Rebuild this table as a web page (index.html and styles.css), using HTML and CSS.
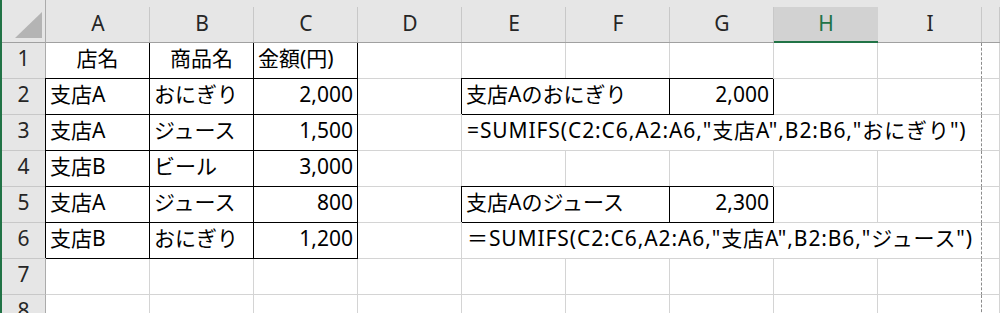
FILE: index.html
```html
<!DOCTYPE html>
<html lang="ja">
<head>
    <meta charset="UTF-8">
    <meta name="viewport" content="width=device-width, initial-scale=1.0">
    <title>SUMIFS</title>
    <link rel="stylesheet" href="styles.css">
</head>
<body>
    <div class="sheet">
        <!-- column headers -->
        <div class="corner"><svg width="43" height="42" viewBox="0 0 43 42"><path d="M40 12V38H13Z" fill="#b4b4b4"/></svg></div>
        <div class="ch">A</div><div class="ch">B</div><div class="ch">C</div><div class="ch">D</div><div class="ch">E</div>
        <div class="ch">F</div><div class="ch">G</div><div class="ch sel">H</div><div class="ch">I</div><div class="ch"></div>

        <!-- 1 -->
        <div class="rh">1</div>
        <div class="c mid k">店名</div><div class="c mid k">商品名</div><div class="c k">金額(円)</div>
        <div class="c"></div><div class="c"></div><div class="c"></div><div class="c"></div><div class="c"></div><div class="c pb"></div><div class="c"></div>

        <!-- 2 -->
        <div class="rh">2</div>
        <div class="c k box">支店A</div><div class="c k box">おにぎり</div><div class="c num k box">2,000</div>
        <div class="c"></div>
        <div class="c k box span2">支店Aのおにぎり</div><div class="c num k box">2,000</div>
        <div class="c"></div><div class="c pb"></div><div class="c"></div>

        <!-- 3 -->
        <div class="rh">3</div>
        <div class="c k box">支店A</div><div class="c k box">ジュース</div><div class="c num k box">1,500</div>
        <div class="c"></div>
        <div class="c pb span5 formula">=SUMIFS(C2:C6,A2:A6,"支店A",B2:B6,"おにぎり")</div>
        <div class="c"></div>

        <!-- 4 -->
        <div class="rh">4</div>
        <div class="c k box">支店B</div><div class="c k box">ビール</div><div class="c num k box">3,000</div>
        <div class="c"></div><div class="c"></div><div class="c"></div><div class="c"></div><div class="c"></div><div class="c pb"></div><div class="c"></div>

        <!-- 5 -->
        <div class="rh">5</div>
        <div class="c k box">支店A</div><div class="c k box">ジュース</div><div class="c num k box">800</div>
        <div class="c"></div>
        <div class="c k box span2">支店Aのジュース</div><div class="c num k box">2,300</div>
        <div class="c"></div><div class="c pb"></div><div class="c"></div>

        <!-- 6 -->
        <div class="rh">6</div>
        <div class="c k box">支店B</div><div class="c k box">おにぎり</div><div class="c num k box">1,200</div>
        <div class="c"></div>
        <div class="c pb span5 formula">＝SUMIFS(C2:C6,A2:A6,"支店A",B2:B6,"ジュース")</div>
        <div class="c"></div>

        <!-- 7 -->
        <div class="rh">7</div>
        <div class="c"></div><div class="c"></div><div class="c"></div><div class="c"></div><div class="c"></div>
        <div class="c"></div><div class="c"></div><div class="c"></div><div class="c pb"></div><div class="c"></div>

        <!-- 8 -->
        <div class="rh">8</div>
        <div class="c"></div><div class="c"></div><div class="c"></div><div class="c"></div><div class="c"></div>
        <div class="c"></div><div class="c"></div><div class="c"></div><div class="c pb"></div><div class="c"></div>
    </div>
</body>
</html>
```

FILE: styles.css
```css
* {
    box-sizing: border-box;
}
body {
    margin: 0;
    width: 1000px;
    height: 313px;
    overflow: hidden;
    background-color: white;
    font-family: "Noto Sans", "Noto Sans CJK JP", sans-serif;
    font-size: 21px;
    color: #000;
}
.sheet {
    display: grid;
    grid-template-columns: 44px repeat(9, 104px) 1fr;
    grid-template-rows: 43px repeat(8, 36px);
    border-left: 2px solid #217346;
}

/* headers */
.corner {
    background-color: #e6e6e6;
    border-right: 1px solid #ababab;
    border-bottom: 1px solid #a0a0a0;
}
.corner svg {
    display: block;
}
.ch {
    padding-top: 8px;
    line-height: 30px;
    text-align: center;
    color: #262626;
    background: linear-gradient(#c8c8c8, #c8c8c8) right bottom / 1px 35px no-repeat, #e6e6e6;
    border-bottom: 1px solid #a0a0a0;
}
.ch.sel {
    color: #217346;
    background: linear-gradient(#e6e6e6 7px, #d2d2d2 7px);
    border-bottom: 2px solid #217346;
}
.rh {
    line-height: 30px;
    text-align: center;
    color: #262626;
    background-color: #e6e6e6;
    border-right: 1px solid #ababab;
    border-bottom: 1px solid #c8c8c8;
}

/* cells */
.c {
    padding: 0 4px;
    line-height: 30px;
    white-space: nowrap;
    border-right: 1px solid #d4d4d4;
    border-bottom: 1px solid #d4d4d4;
}
.mid { text-align: center; }
.num { text-align: right; }
.k {
    border-right-color: #000;
    border-bottom-color: #000;
}
.box {
    box-shadow: -1px -1px 0 #000;
}
.pb {
    border-right: 1px dashed #8c8c8c;
}
.span2 { grid-column: span 2; }
.span5 { grid-column: span 5; }
.formula {
    padding-left: 5px;
    letter-spacing: 0.9px;
}
```
